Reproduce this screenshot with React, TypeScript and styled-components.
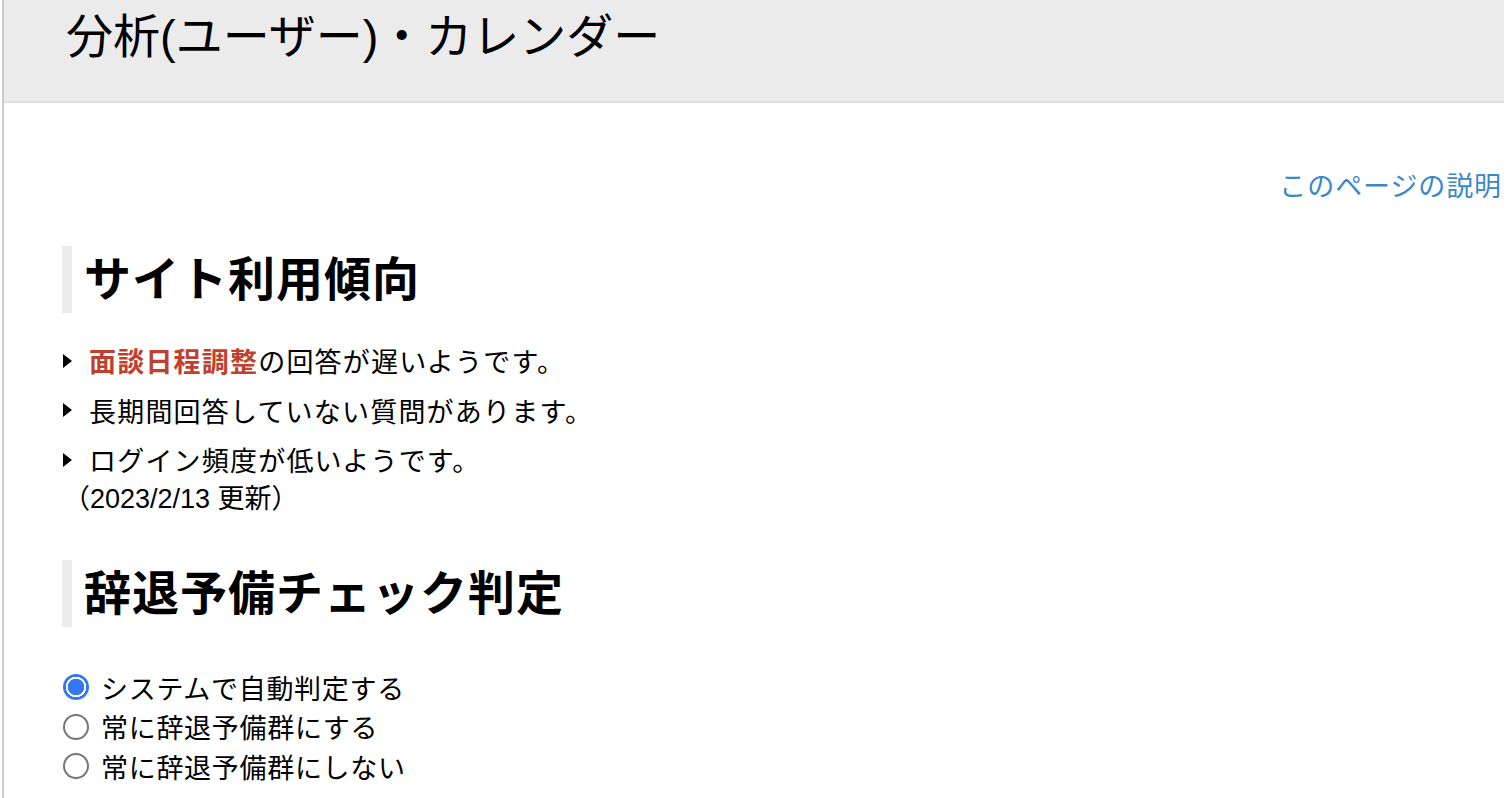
import React, { useState } from 'react'
import styled, { createGlobalStyle } from 'styled-components'

const GlobalStyle = createGlobalStyle`
  html, body {
    margin: 0;
    padding: 0;
    background: #fff;
  }
  body {
    font-family: "Liberation Sans", "Noto Sans CJK JP", sans-serif;
    color: #000;
  }
`

const trends = [
  { strong: '面談日程調整', rest: 'の回答が遅いようです。' },
  { strong: '', rest: '長期間回答していない質問があります。' },
  { strong: '', rest: 'ログイン頻度が低いようです。' },
]

const options = ['システムで自動判定する', '常に辞退予備群にする', '常に辞退予備群にしない']

const App: React.FC = () => {
  const [mode, setMode] = useState(0)

  return (
    <>
      <GlobalStyle />
      <Page>
        <Header>
          <Title>分析(ユーザー)・カレンダー</Title>
        </Header>

        <HelpRow>
          <HelpLink href="#">このページの説明</HelpLink>
        </HelpRow>

        <SectionTitle>サイト利用傾向</SectionTitle>
        <TrendList>
          {trends.map((t, i) => (
            <TrendItem key={i}>
              <Arrow />
              <span>
                {t.strong && <Alert>{t.strong}</Alert>}
                {t.rest}
              </span>
            </TrendItem>
          ))}
        </TrendList>
        <Updated>（2023/2/13 更新）</Updated>

        <SectionTitle $second>辞退予備チェック判定</SectionTitle>
        <RadioGroup>
          {options.map((label, i) => (
            <RadioLabel key={i}>
              <Radio
                type="radio"
                name="judge"
                checked={mode === i}
                onChange={() => setMode(i)}
              />
              {label}
            </RadioLabel>
          ))}
        </RadioGroup>
      </Page>
    </>
  )
}

const Page = styled.div`
  margin-left: 2px;
  width: 1500px;
  min-height: 798px;
  border-left: 2px solid #cccccc;
  box-sizing: content-box;
`

const Header = styled.header`
  height: 103px;
  background: #ebebeb;
  border-bottom: 2px solid #dddddd;
  box-sizing: border-box;
  padding: 9px 0 0 62px;
`

const Title = styled.h1`
  margin: 0;
  font-size: 47px;
  font-weight: 400;
  line-height: 56px;
`

const HelpRow = styled.div`
  display: flex;
  justify-content: flex-end;
  padding: 64px 2px 0 0;
  height: 40px;
`

const HelpLink = styled.a`
  font-size: 27px;
  line-height: 40px;
  letter-spacing: 0.9px;
  color: #3a87c9;
  text-decoration: none;
`

const SectionTitle = styled.h2<{ $second?: boolean }>`
  margin: ${(p) => (p.$second ? '42px' : '39px')} 0 0 58px;
  height: 67px;
  border-left: 10px solid #ebebeb;
  padding-left: 12px;
  font-size: 47px;
  font-weight: 700;
  line-height: 67px;
  letter-spacing: 1px;
`

const TrendList = styled.ul`
  list-style: none;
  margin: 23px 0 0 0;
  padding: 0 0 0 59px;
`

const TrendItem = styled.li`
  display: flex;
  align-items: center;
  gap: 17px;
  height: 49.5px;
  font-size: 27px;
  letter-spacing: 1.2px;
`

const Arrow = styled.span`
  flex: none;
  width: 0;
  height: 0;
  border-top: 7.5px solid transparent;
  border-bottom: 7.5px solid transparent;
  border-left: 9.5px solid #000;
`

const Alert = styled.span`
  color: #c0402e;
  font-weight: 700;
`

const Updated = styled.div`
  margin: -5px 0 0 59px;
  font-size: 27px;
  line-height: 38px;
`

const RadioGroup = styled.div`
  display: flex;
  flex-direction: column;
  margin: 41px 0 0 59px;
`

const RadioLabel = styled.label`
  display: flex;
  align-items: center;
  gap: 12px;
  height: 39.5px;
  font-size: 27px;
  letter-spacing: 0.7px;
`

const Radio = styled.input`
  appearance: none;
  margin: 0;
  width: 26px;
  height: 26px;
  border-radius: 50%;
  border: 2px solid #767676;
  box-sizing: border-box;
  background: #fff;

  &:checked {
    border: 2px solid #3478f6;
    background: radial-gradient(circle, #3478f6 0 8px, #fff 8.5px 10px, #3478f6 10.5px);
  }
`

export default App
